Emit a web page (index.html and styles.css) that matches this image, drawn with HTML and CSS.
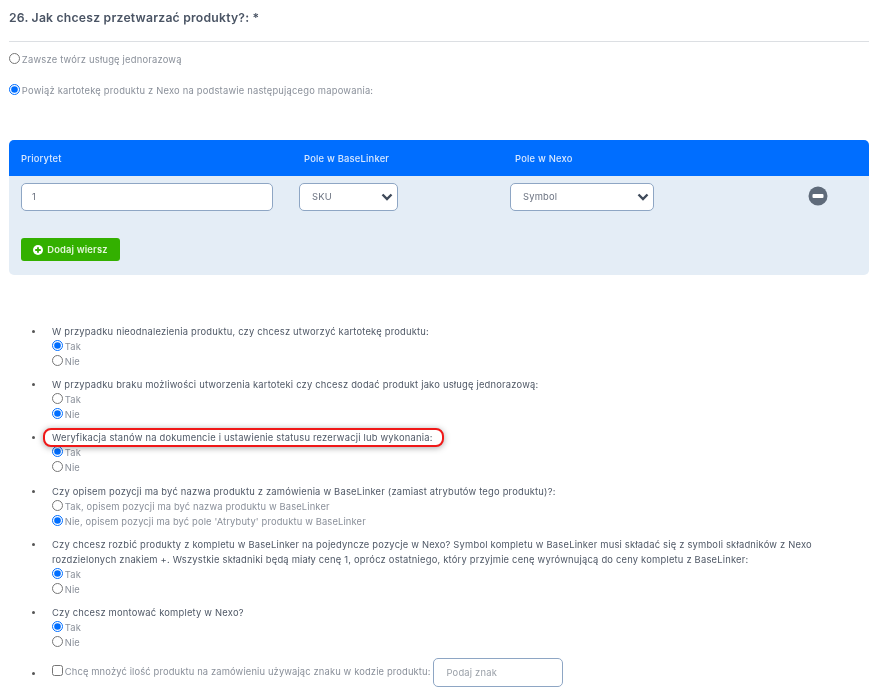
FILE: index.html
```html
<!DOCTYPE html>
<html lang="pl">
<head>
<meta charset="utf-8">
<title>Jak chcesz przetwarzać produkty?</title>
<link rel="stylesheet" href="styles.css">
</head>
<body>
<main class="page">
  <h2 class="title">26. Jak chcesz przetwarzać produkty?: *</h2>
  <hr class="rule">
  <label class="top-option"><input type="radio" name="mode"> Zawsze twórz usługę jednorazową</label>
  <label class="top-option second"><input type="radio" name="mode" checked> Powiąż kartotekę produktu z Nexo na podstawie następującego mapowania:</label>

  <section class="map">
    <div class="map-head">
      <div class="col-a">Priorytet</div>
      <div class="col-b">Pole w BaseLinker</div>
      <div class="col-c">Pole w Nexo</div>
    </div>
    <div class="map-body">
      <div class="map-row">
        <div class="col-a"><input class="field wide" type="text" value="1"></div>
        <div class="col-b"><select class="field sel sel-sku"><option>SKU</option></select></div>
        <div class="col-c"><select class="field sel sel-sym"><option>Symbol</option></select></div>
        <svg class="minus" width="20" height="20" viewBox="0 0 20 20"><circle cx="10" cy="10" r="9.5" fill="#5f6b7a"/><rect x="4.5" y="8" width="11" height="4" rx="1" fill="#fff"/></svg>
      </div>
      <button class="add" type="button">
        <svg width="10" height="10" viewBox="0 0 10 10"><circle cx="5" cy="5" r="5" fill="#fff"/><path d="M5 2.2v5.6M2.2 5h5.6" stroke="#33b000" stroke-width="1.8"/></svg>
        Dodaj wiersz
      </button>
    </div>
  </section>

  <ul class="opts">
    <li>
      <div class="q">W przypadku nieodnalezienia produktu, czy chcesz utworzyć kartotekę produktu:</div>
      <label class="opt"><input type="radio" name="a" checked> Tak</label>
      <label class="opt"><input type="radio" name="a"> Nie</label>
    </li>
    <li>
      <div class="q">W przypadku braku możliwości utworzenia kartoteki czy chcesz dodać produkt jako usługę jednorazową:</div>
      <label class="opt"><input type="radio" name="b"> Tak</label>
      <label class="opt"><input type="radio" name="b" checked> Nie</label>
    </li>
    <li class="marked">
      <div class="q"><span class="mark">Weryfikacja stanów na dokumencie i ustawienie statusu rezerwacji lub wykonania:</span></div>
      <label class="opt"><input type="radio" name="c" checked> Tak</label>
      <label class="opt"><input type="radio" name="c"> Nie</label>
    </li>
    <li>
      <div class="q">Czy opisem pozycji ma być nazwa produktu z zamówienia w BaseLinker (zamiast atrybutów tego produktu)?:</div>
      <label class="opt"><input type="radio" name="d"> Tak, opisem pozycji ma być nazwa produktu w BaseLinker</label>
      <label class="opt"><input type="radio" name="d" checked> Nie, opisem pozycji ma być pole 'Atrybuty' produktu w BaseLinker</label>
    </li>
    <li>
      <div class="q">Czy chcesz rozbić produkty z kompletu w BaseLinker na pojedyncze pozycje w Nexo? Symbol kompletu w BaseLinker musi składać się z symboli składników z Nexo rozdzielonych znakiem +. Wszystkie składniki będą miały cenę 1, oprócz ostatniego, który przyjmie cenę wyrównującą do ceny kompletu z BaseLinker:</div>
      <label class="opt"><input type="radio" name="e" checked> Tak</label>
      <label class="opt"><input type="radio" name="e"> Nie</label>
    </li>
    <li>
      <div class="q">Czy chcesz montować komplety w Nexo?</div>
      <label class="opt"><input type="radio" name="f" checked> Tak</label>
      <label class="opt"><input type="radio" name="f"> Nie</label>
    </li>
    <li class="multi">
      <label class="opt inline"><input type="checkbox"> Chcę mnożyć ilość produktu na zamówieniu używając znaku w kodzie produktu:</label>
      <input class="field sign" type="text" placeholder="Podaj znak">
    </li>
  </ul>
</main>
</body>
</html>
```
FILE: styles.css
```css
* { box-sizing: border-box; }
html, body { margin: 0; background: #fff; }
body {
  font-family: "Inter", "Liberation Sans", sans-serif;
  font-size: 9.4px;
  letter-spacing: .2px;
  color: #4a5464;
  overflow: hidden;
  height: 696px;
}
.page { padding: 10px 4px 0 9px; filter: blur(0.45px); }
.title { margin: 0; font-size: 12.2px; letter-spacing: .22px; line-height: 15px; font-weight: 600; color: #4a5464; }
.rule { margin: 16px 0 0; border: 0; border-top: 1px solid #dcdfe3; }
input[type="radio"], input[type="checkbox"] {
  width: 11px; height: 11px; margin: 0 -1px 0 0; accent-color: #006eff; vertical-align: -1px;
}
.top-option { display: block; margin-top: 10px; line-height: 15px; color: #8a909a; }
.top-option.second { margin-top: 16px; }
.map { margin-top: 42px; border-radius: 5px; overflow: hidden; background: #e4edf6; height: 135px; }
.map-head { display: flex; height: 36px; align-items: center; background: #006eff; color: #d8e8ff; font-weight: 500; padding-left: 12px; }
.map-body { padding: 7px 12px 0; }
.map-row { display: flex; align-items: flex-start; position: relative; }
.col-a { width: 278px; }
.col-b { width: 211px; }
.col-c { width: 298px; }
.map-head .col-b { padding-left: 5px; }
.map-head .col-c { padding-left: 5px; }
.field { height: 28px; border: 1px solid #8ea6c4; border-radius: 5px; background-color: #fff; font: inherit; letter-spacing: inherit; color: #6b7280; padding: 0 12px 2px; display: block; }
.wide { width: 252px; padding-left: 10px; }
.sel { appearance: none; -webkit-appearance: none; height: 28px; background-image: url("data:image/svg+xml;utf8,<svg xmlns='http://www.w3.org/2000/svg' width='12' height='8' viewBox='0 0 12 8'><path d='M1.5 1.5 6 6l4.5-4.5' fill='none' stroke='%233f4a5a' stroke-width='2.4'/></svg>"); background-repeat: no-repeat; background-position: right 4px center; }
.sel-sku { width: 99px; }
.sel-sym { width: 144px; }
.minus { margin-top: 3px; }
.add { display: flex; align-items: center; gap: 4px; margin-top: 27px; width: 99px; height: 23px; justify-content: center; border: 0; border-radius: 3px; background: #33b000; color: #e4f6da; font: inherit; font-weight: 600; letter-spacing: .15px; }
.opts { margin: 49px 0 0; padding: 0 0 0 43px; list-style: none; }
.opts li { margin-bottom: 8px; line-height: 15px; position: relative; }
.opts li::before { content: ""; position: absolute; left: -20px; top: 6px; width: 3px; height: 3px; border-radius: 50%; background: #555; }
.opts li.marked { margin-bottom: 9px; }
.q { color: #4f5866; }
.opt { display: block; color: #8a909a; line-height: 15px; letter-spacing: .13px; }
.mark { display: inline-block; margin: -2px 0 -2px -9px; padding: 0 9px 0 7px; height: 19px; line-height: 16px; border: 2px solid #f01818; border-radius: 8px; box-shadow: 0 1px 6px rgba(0,0,0,.35); background: #fff; position: relative; }
.multi .inline { display: inline; }
.opts li.multi::before { top: 14px; }
.sign { display: inline-block; width: 130px; height: 29px; padding: 0 12px; margin-left: 0; vertical-align: middle; }
.sign::placeholder { color: #9aa0a8; }
```
